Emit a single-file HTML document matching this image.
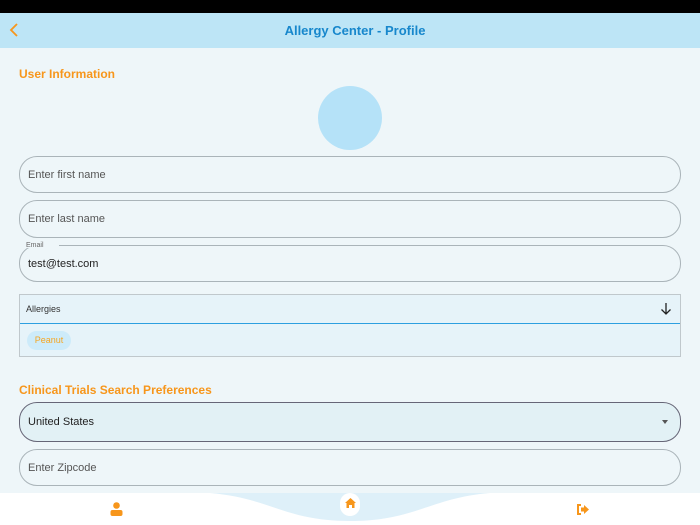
<!DOCTYPE html>
<html><head><style>
*{margin:0;padding:0;box-sizing:border-box}
body{width:700px;height:525px;overflow:hidden;background:#eef6f9;font-family:"Liberation Sans",sans-serif;position:relative}
.abs{position:absolute}
.field{position:absolute;left:19px;width:662px;border:1px solid #aab4b9;border-radius:18px;font-size:11px;color:#555;padding-left:8px;display:flex;align-items:center}
.h{color:#f7961b;font-weight:bold;font-size:12px;position:absolute;left:19px}
</style></head><body>
<div class="abs" style="top:0;left:0;width:700px;height:13px;background:#000"></div>
<div class="abs" style="top:13px;left:0;width:700px;height:35px;background:#bde5f6"></div>
<svg class="abs" style="top:23px;left:9px" width="10" height="14"><path d="M8 1 L2 7 L8 13" stroke="#f7961b" stroke-width="1.8" fill="none"/></svg>
<div class="abs" style="top:23px;left:0;width:710px;text-align:center;color:#1787cc;font-weight:bold;font-size:13px">Allergy Center - Profile</div>
<div class="h" style="top:67px">User Information</div>
<div class="abs" style="left:318px;top:86px;width:64px;height:64px;border-radius:50%;background:#b5e2f8"></div>
<div class="field" style="top:156px;height:37px">Enter first name</div>
<div class="field" style="top:200px;height:38px">Enter last name</div>
<div class="field" style="top:245px;height:37px;color:#222">test@test.com</div>
<div class="abs" style="top:240px;left:22px;width:37px;height:8px;background:#eef6f9"></div>
<div class="abs" style="top:242px;left:26px;font-size:7px;color:#666">Email</div>
<div class="abs" style="top:294px;left:19px;width:662px;height:63px;background:#e6f3f9;border:1px solid #c0c8cc"></div>
<div class="abs" style="top:323px;left:20px;width:660px;height:1px;background:#2d9fe0"></div>
<div class="abs" style="top:304px;left:26px;font-size:9px;color:#333">Allergies</div>
<svg class="abs" style="top:302px;left:660px" width="12" height="14"><path d="M6 1 V12 M1.5 7.5 L6 12 L10.5 7.5" stroke="#222" stroke-width="1.3" fill="none"/></svg>
<div class="abs" style="top:331px;left:27px;width:44px;height:19px;border-radius:10px;background:#cdebfa;color:#f5a623;font-size:9px;text-align:center;line-height:19px">Peanut</div>
<div class="h" style="top:383px">Clinical Trials Search Preferences</div>
<div class="field" style="top:402px;height:40px;background:#e2f1f5;border-color:#667;color:#222">United States</div>
<div class="abs" style="top:420px;left:662px;width:0;height:0;border-left:3.5px solid transparent;border-right:3.5px solid transparent;border-top:4px solid #555"></div>
<div class="field" style="top:449px;height:37px">Enter Zipcode</div>
<div class="abs" style="top:493px;left:0;width:700px;height:32px;background:#fff"></div>
<svg class="abs" style="top:493px;left:0" width="700" height="32"><path d="M210 0 C 270 5, 285 28, 350 28 C 415 28, 430 5, 490 0 Z" fill="#def0f9"/></svg>
<div class="abs" style="top:493px;left:340px;width:20px;height:23px;border-radius:10px;background:#fff"></div>
<svg class="abs" style="top:497px;left:344px" width="13" height="12"><path d="M6.5 1 L12 6 H10.5 V11 H8 V8 H5 V11 H2.5 V6 H1 Z" fill="#f7961b"/></svg>
<svg class="abs" style="top:502px;left:110px" width="13" height="14"><circle cx="6.5" cy="3.5" r="3.3" fill="#f7961b"/><rect x="0.5" y="8" width="12" height="6" rx="2" fill="#f7961b"/></svg>
<svg class="abs" style="top:504px;left:576px" width="14" height="11"><path d="M5 1 H2 V10 H5" stroke="#f7961b" stroke-width="2" fill="none"/><path d="M5 3.5 H8 V1 L13 5.5 L8 10 V7.5 H5 Z" fill="#f7961b"/></svg>
</body></html>
